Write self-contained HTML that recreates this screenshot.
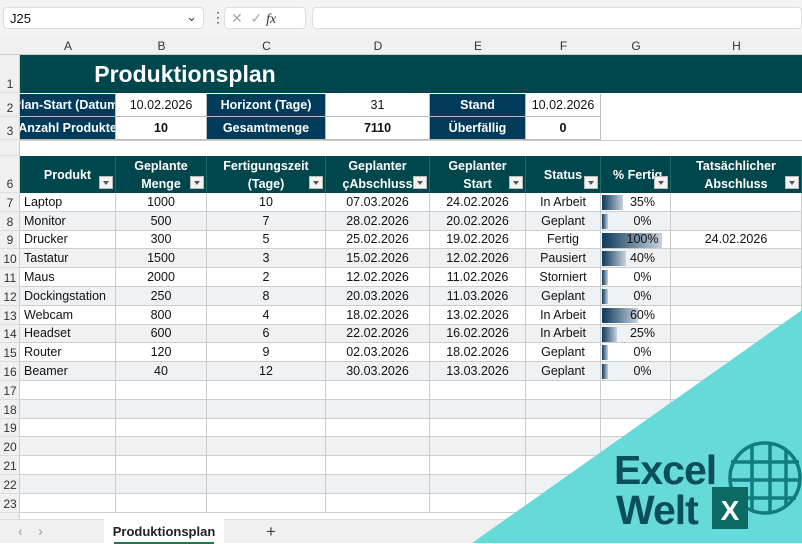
<!DOCTYPE html>
<html><head><meta charset="utf-8"><style>
*{box-sizing:border-box;margin:0;padding:0}
body{width:802px;height:543px;overflow:hidden;background:#fff;font-family:"Liberation Sans",sans-serif;position:relative;font-size:12.5px;color:#111}
.abs{position:absolute}
.c{position:absolute;display:flex;align-items:center;justify-content:center;white-space:nowrap;overflow:hidden}
.hd{color:#333;font-size:12px;background:#f0f0f0}
.dd{position:absolute;width:14px;height:13px;background:#f3f3f3;border:1px solid #bbb;}
.dd:after{content:"";position:absolute;left:3px;top:4px;border-left:3px solid transparent;border-right:3px solid transparent;border-top:4px solid #555}
</style></head><body>
<div class="abs" style="left:0;top:0;width:802px;height:37px;background:#f3f3f3"></div>
<div class="abs" style="left:3px;top:7px;width:201px;height:22px;background:#fff;border:1px solid #ddd;border-radius:4px;font-size:13px;padding:3px 6px">J25<span style="position:absolute;right:6px;top:1px;color:#444">⌄</span></div>
<div class="abs" style="left:211px;top:9px;font-size:14px;color:#444">⋮</div>
<div class="abs" style="left:224px;top:7px;width:82px;height:22px;background:#fff;border:1px solid #ddd;border-radius:4px;color:#aaa;font-size:14px;padding:2px 6px">✕ &nbsp;✓ <i style="color:#333;font-family:'Liberation Serif',serif">fx</i></div>
<div class="abs" style="left:312px;top:7px;width:490px;height:22px;background:#fff;border:1px solid #ddd;border-radius:4px"></div>
<div class="abs" style="left:0;top:37px;width:802px;height:18px;background:#f0f0f0;border-bottom:1px solid #ccc"></div>
<div class="c hd" style="left:20px;top:37px;width:96px;height:17px">A</div>
<div class="c hd" style="left:116px;top:37px;width:91px;height:17px">B</div>
<div class="c hd" style="left:207px;top:37px;width:119px;height:17px">C</div>
<div class="c hd" style="left:326px;top:37px;width:104px;height:17px">D</div>
<div class="c hd" style="left:430px;top:37px;width:96px;height:17px">E</div>
<div class="c hd" style="left:526px;top:37px;width:75px;height:17px">F</div>
<div class="c hd" style="left:601px;top:37px;width:70px;height:17px">G</div>
<div class="c hd" style="left:671px;top:37px;width:131px;height:17px">H</div>
<div class="abs" style="left:0;top:55px;width:20px;height:465px;background:#f0f0f0;border-right:1px solid #ccc"></div>
<div id="rh"></div>
<div class="c" style="left:20px;top:55px;width:782px;height:38px;background:#00474d"></div>
<div class="c" style="left:20px;top:55px;width:330px;height:38px;color:#fff;font-weight:bold;font-size:23px">Produktionsplan</div>
<div class="abs" style="left:20px;top:94px;width:581px;height:46px;background:#bbb"></div>
<div class="c" style="left:20px;top:94px;width:95px;height:22px;background:#003c5a;color:#fff;font-weight:bold">Plan-Start (Datum)</div>
<div class="c" style="left:116px;top:94px;width:90px;height:22px;background:#fff">10.02.2026</div>
<div class="c" style="left:207px;top:94px;width:118px;height:22px;background:#003c5a;color:#fff;font-weight:bold">Horizont (Tage)</div>
<div class="c" style="left:326px;top:94px;width:103px;height:22px;background:#fff">31</div>
<div class="c" style="left:430px;top:94px;width:95px;height:22px;background:#003c5a;color:#fff;font-weight:bold">Stand</div>
<div class="c" style="left:526px;top:94px;width:74px;height:22px;background:#fff">10.02.2026</div>
<div class="c" style="left:20px;top:117px;width:95px;height:22px;background:#003c5a;color:#fff;font-weight:bold">Anzahl Produkte</div>
<div class="c" style="left:116px;top:117px;width:90px;height:22px;background:#fff;font-weight:bold">10</div>
<div class="c" style="left:207px;top:117px;width:118px;height:22px;background:#003c5a;color:#fff;font-weight:bold">Gesamtmenge</div>
<div class="c" style="left:326px;top:117px;width:103px;height:22px;background:#fff;font-weight:bold">7110</div>
<div class="c" style="left:430px;top:117px;width:95px;height:22px;background:#003c5a;color:#fff;font-weight:bold">Überfällig</div>
<div class="c" style="left:526px;top:117px;width:74px;height:22px;background:#fff;font-weight:bold">0</div>
<div class="abs" style="left:20px;top:140px;width:782px;height:1px;background:#ccc"></div>
<div class="abs" style="left:20px;top:156px;width:782px;height:37px;background:#1a6a6a"></div>
<div id="th"></div>
<div id="body"></div>
<div class="abs" style="left:0;top:519px;width:802px;height:24px;background:#f0f0f0;border-top:1px solid #ddd"></div>
<div class="abs" style="left:18px;top:523px;color:#999;font-size:14px">‹ &nbsp;&nbsp;&nbsp;›</div>
<div class="abs" style="left:104px;top:519px;width:120px;height:24px;background:#fff;font-weight:bold;font-size:13px;color:#1e6b3a;text-align:center;padding-top:5px"><span style="color:#222">Produktionsplan</span><div style="width:100px;height:2px;background:#1e7a46;margin:3px auto 0"></div></div>
<div class="abs" style="left:266px;top:522px;font-size:17px;color:#444">+</div>
<svg class="abs" style="left:0;top:0" width="802" height="543"><polygon points="472,543 802,310 802,543" fill="#66d9d9"/>
<g fill="none" stroke="#127c80" stroke-width="3.5"><circle cx="765" cy="478" r="35"/><line x1="731" y1="462" x2="799" y2="462"/><line x1="731" y1="480" x2="800" y2="480"/><line x1="735" y1="498" x2="796" y2="498"/><line x1="752" y1="445" x2="752" y2="510"/><line x1="770" y1="443" x2="770" y2="512"/><line x1="786" y1="450" x2="786" y2="506"/></g>
<rect x="712" y="487" width="36" height="42" fill="#0b6a64"/>
<text x="730" y="520" font-family="Liberation Sans" font-weight="bold" font-size="28" fill="#fff" text-anchor="middle">X</text>
<text x="614" y="484" font-family="Liberation Sans" font-weight="bold" font-size="41" fill="#0a4f5a" letter-spacing="-1">Excel</text>
<text x="616" y="524" font-family="Liberation Sans" font-weight="bold" font-size="41" fill="#0a4f5a" letter-spacing="-1">Welt</text>
</svg>
<script>
const cols=[[20,96],[116,91],[207,119],[326,104],[430,96],[526,75],[601,70],[671,131]];
let h='';
const rh=[[1,55,38],[2,94,23],[3,117,23],[5,140,16],[6,156,37]];
for(let i=0;i<17;i++)rh.push([7+i,193+i*18.8,18.8]);
for(const [n,t,hh] of rh)h+=`<div class="c" style="left:0;top:${t}px;width:20px;height:${hh}px;align-items:flex-end;font-size:12px;color:#333;padding-bottom:1px;border-bottom:1px solid #ddd">${n==5?'':n}</div>`;
document.getElementById('rh').innerHTML=h;
const hd=['Produkt','Geplante<br>Menge','Fertigungszeit<br>(Tage)','Geplanter<br>çAbschluss','Geplanter<br>Start','Status','% Fertig','Tatsächlicher<br>Abschluss'];
h='';
hd.forEach((x,i)=>{const [l,w]=cols[i];h+=`<div class="c" style="left:${l}px;top:156px;width:${w-1}px;height:37px;background:#00474d;color:#fff;font-weight:bold;text-align:center;line-height:18px;${i==6?'justify-content:flex-start;padding-left:12px':''}">${x}</div><div class="dd" style="left:${l+w-17}px;top:176px"></div>`;});
document.getElementById('th').innerHTML=h;
const d=[['Laptop',1000,10,'07.03.2026','24.02.2026','In Arbeit',35,''],['Monitor',500,7,'28.02.2026','20.02.2026','Geplant',0,''],['Drucker',300,5,'25.02.2026','19.02.2026','Fertig',100,'24.02.2026'],['Tastatur',1500,3,'15.02.2026','12.02.2026','Pausiert',40,''],['Maus',2000,2,'12.02.2026','11.02.2026','Storniert',0,''],['Dockingstation',250,8,'20.03.2026','11.03.2026','Geplant',0,''],['Webcam',800,4,'18.02.2026','13.02.2026','In Arbeit',60,''],['Headset',600,6,'22.02.2026','16.02.2026','In Arbeit',25,''],['Router',120,9,'02.03.2026','18.02.2026','Geplant',0,''],['Beamer',40,12,'30.03.2026','13.03.2026','Geplant',0,'']];
h='';
for(let r=0;r<17;r++){const t=193+r*18.8;const bg=r%2?'#eef2f4':'#fff';
cols.forEach(([l,w],i)=>{let v='';let st='';const row=d[r];
if(row){v=row[i];if(i==0)st='justify-content:flex-start;padding-left:4px';
if(i==6){const p=row[6];v=`<div style="position:absolute;left:1px;top:2px;height:15px;width:${Math.max(6,p*0.6)}px;background:linear-gradient(90deg,#0d3a5c,#c8d3dc)"></div><span style="position:relative;margin-left:14px">${p}%</span>`;}}
h+=`<div class="c" style="left:${l}px;top:${t}px;width:${w}px;height:18.8px;background:${bg};border-right:1px solid #ccc;border-bottom:1px solid #ccc;${st}">${v}</div>`;});}
document.getElementById('body').innerHTML=h;
</script>
</body></html>
